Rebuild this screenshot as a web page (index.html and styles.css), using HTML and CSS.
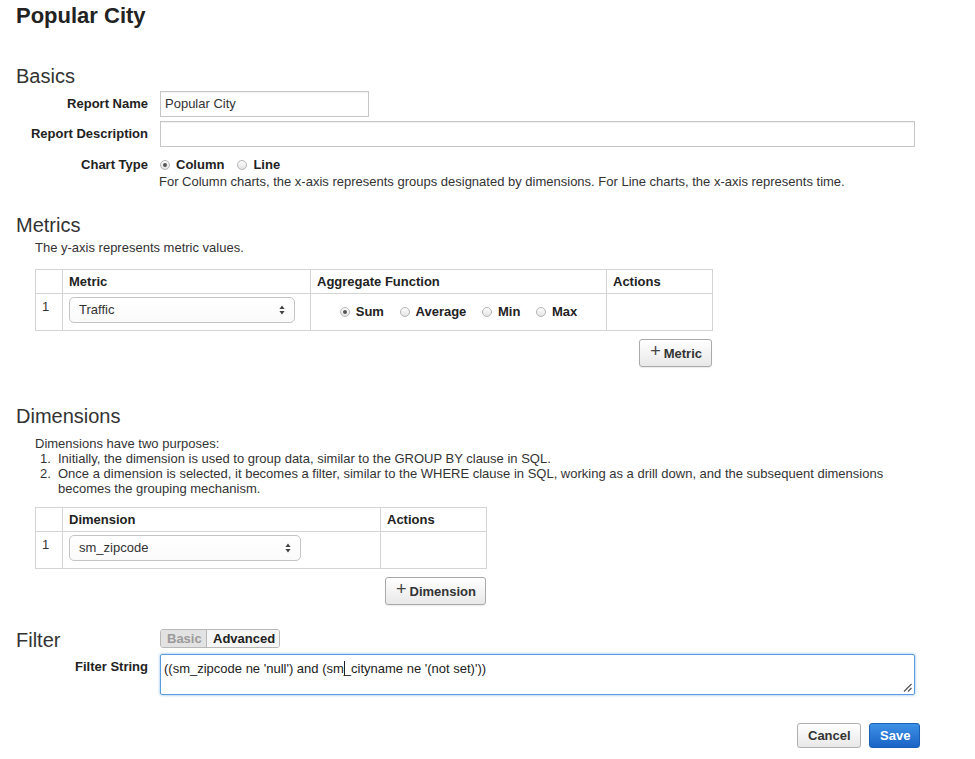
FILE: index.html
```html
<!DOCTYPE html>
<html>
<head>
<meta charset="utf-8">
<link rel="stylesheet" href="styles.css">
</head>
<body>
<div class="page">
  <h1 class="title">Popular City</h1>

  <h2 class="sec-title basics-title">Basics</h2>
  <div class="form-row row-name">
    <div class="lbl">Report Name</div>
    <div class="field"><div class="input short">Popular City</div></div>
  </div>
  <div class="form-row row-desc">
    <div class="lbl">Report Description</div>
    <div class="field"><div class="input"></div></div>
  </div>
  <div class="form-row row-chart">
    <div class="lbl lbl-tight">Chart Type</div>
    <div class="field">
      <div class="radios">
        <span class="opt"><span class="radio on"></span><b>Column</b></span>
        <span class="opt"><span class="radio"></span><b>Line</b></span>
      </div>
      <div class="help">For Column charts, the x-axis represents groups designated by dimensions. For Line charts, the x-axis represents time.</div>
    </div>
  </div>

  <h2 class="sec-title metrics-title">Metrics</h2>
  <div class="indent">
    <p class="desc">The y-axis represents metric values.</p>
    <div class="tbl-wrap metrics-wrap">
      <table class="tbl">
        <colgroup><col class="c-num"><col class="c-metric"><col class="c-agg"><col class="c-act"></colgroup>
        <thead><tr><th></th><th>Metric</th><th>Aggregate Function</th><th>Actions</th></tr></thead>
        <tbody><tr>
          <td class="num">1</td>
          <td class="sel-cell"><div class="select sel-metric">Traffic<svg class="arrows" width="6" height="10" viewBox="0 0 6 10"><path d="M3 0.5L5.6 4H0.4Z M3 9.5L5.6 6H0.4Z" fill="#444"/></svg></div></td>
          <td class="agg">
            <span class="opt"><span class="radio on"></span><b>Sum</b></span>
            <span class="opt"><span class="radio"></span><b>Average</b></span>
            <span class="opt"><span class="radio"></span><b>Min</b></span>
            <span class="opt"><span class="radio"></span><b>Max</b></span>
          </td>
          <td></td>
        </tr></tbody>
      </table>
      <div class="btn-row"><button class="btn add-btn"><span class="plus">+</span>Metric</button></div>
    </div>
  </div>

  <h2 class="sec-title dims-title">Dimensions</h2>
  <div class="indent">
    <p class="desc dims-desc">Dimensions have two purposes:</p>
    <ol class="dims-list">
      <li>Initially, the dimension is used to group data, similar to the GROUP BY clause in SQL.</li>
      <li>Once a dimension is selected, it becomes a filter, similar to the WHERE clause in SQL, working as a drill down, and the subsequent dimensions becomes the grouping mechanism.</li>
    </ol>
    <div class="tbl-wrap dims-wrap">
      <table class="tbl">
        <colgroup><col class="c-num"><col class="c-dim"><col class="c-act"></colgroup>
        <thead><tr><th></th><th>Dimension</th><th>Actions</th></tr></thead>
        <tbody><tr>
          <td class="num">1</td>
          <td class="sel-cell"><div class="select sel-dim">sm_zipcode<svg class="arrows" width="6" height="10" viewBox="0 0 6 10"><path d="M3 0.5L5.6 4H0.4Z M3 9.5L5.6 6H0.4Z" fill="#444"/></svg></div></td>
          <td></td>
        </tr></tbody>
      </table>
      <div class="btn-row"><button class="btn add-btn"><span class="plus">+</span>Dimension</button></div>
    </div>
  </div>

  <div class="form-row filter-head">
    <h2 class="sec-title">Filter</h2>
    <div class="field">
      <div class="toggle"><span class="tg tg-off">Basic</span><span class="tg tg-on">Advanced</span></div>
    </div>
  </div>
  <div class="form-row row-filter">
    <div class="lbl lbl-filter">Filter String</div>
    <div class="field">
      <div class="textarea">((sm_zipcode ne 'null') and (sm_cityname ne '(not set)'))<span class="caret"></span><svg class="grip" width="9" height="9" viewBox="0 0 9 9"><path d="M8.5 1L1 8.5M8.5 5L5 8.5" stroke="#555" stroke-width="1.2"/></svg></div>
    </div>
  </div>

  <div class="footer">
    <button class="btn cancel">Cancel</button>
    <button class="btn save">Save</button>
  </div>
</div>
</body>
</html>
```

FILE: styles.css
```css
* { box-sizing: border-box; }
body {
  margin: 0;
  font-family: "Liberation Sans", Arial, Helvetica, sans-serif;
  font-size: 13px;
  color: #333;
  background: #fff;
}
.page { width: 899px; margin-left: 16px; padding-top: 3px; }
.title { margin: 0; font-size: 22px; line-height: 26px; font-weight: bold; color: #222; }
.sec-title { margin: 0; font-size: 20px; line-height: 24px; font-weight: normal; color: #333; }
.basics-title { margin-top: 35px; }
.metrics-title { margin-top: 23px; }
.dims-title { margin-top: 37px; }

.form-row { display: grid; grid-template-columns: 132px 1fr; column-gap: 12px; }
.lbl { text-align: right; font-weight: bold; line-height: 26px; color: #222; white-space: nowrap; }
.row-name { margin-top: 3px; }
.row-desc { margin-top: 4px; }
.row-chart { margin-top: 9px; }
.lbl-tight { line-height: 18px; }

.input {
  height: 26px;
  border: 1px solid #c6c6c6;
  box-shadow: inset 0 1px 1px rgba(0,0,0,0.06);
  padding: 0 4px;
  line-height: 24px;
  color: #333;
  background: #fff;
}
.input.short { width: 209px; }

.radios { display: flex; gap: 13px; line-height: 18px; }
.opt { display: inline-flex; align-items: center; gap: 6px; }
.opt b { color: #222; }
.radio {
  width: 10px; height: 10px; border-radius: 50%;
  border: 1px solid #b5b5b5;
  background: linear-gradient(#fdfdfd, #e4e4e4);
  position: relative;
  flex: none;
}
.radio.on::after {
  content: ""; position: absolute; left: 2px; top: 2px;
  width: 4px; height: 4px; border-radius: 50%; background: #555;
}
.help { line-height: 16px; margin-left: -1px; color: #333; }

.indent { margin-left: 19px; }
.desc { margin: 3px 0 0; line-height: 16px; }
.tbl-wrap { margin-top: 13px; }
.metrics-wrap { width: 677px; }
.dims-wrap { width: 451px; margin-top: 11px; }

.tbl { border-collapse: collapse; table-layout: fixed; width: 100%; }
.tbl th, .tbl td { border: 1px solid #d4d4d4; padding: 0 6px; vertical-align: top; color: #333; }
.tbl thead tr { height: 24px; }
.tbl th { text-align: left; font-weight: bold; color: #222; line-height: 22px; vertical-align: middle; }
.tbl tbody tr { height: 37px; }
.tbl td.num { padding-top: 5px; line-height: 16px; color: #333; }
.tbl td.sel-cell { padding-top: 3px; }
.c-num { width: 27px; }
.c-metric { width: 248px; }
.c-agg { width: 296px; }
.c-act { width: 106px; }
.c-dim { width: 318px; }

.select {
  height: 26px;
  border: 1px solid #c4c4c4;
  border-radius: 5px;
  background: linear-gradient(#fff, #fafafa);
  padding: 0 9px;
  line-height: 24px;
  display: flex;
  justify-content: space-between;
  align-items: center;
  color: #333;
}
.sel-metric { width: 226px; }
.sel-dim { width: 232px; }
.arrows { flex: none; }

.tbl td.agg { text-align: center; vertical-align: middle; padding: 0; }
.agg .opt { margin: 0 6px; }

.btn-row { display: flex; justify-content: flex-end; margin-top: 8px; }
.btn {
  font-family: inherit;
  font-size: 13px;
  font-weight: bold;
  color: #333;
  border: 1px solid #aaa;
  border-radius: 3px;
  background: linear-gradient(#ffffff, #e8e8e8);
  box-shadow: 0 1px 1px rgba(0,0,0,0.08);
  cursor: pointer;
}
.add-btn { height: 28px; padding: 0 9px 0 10px; display: inline-flex; align-items: center; }
.plus { font-weight: normal; font-size: 18px; margin-right: 3px; position: relative; top: -2px; color: #444; }

.dims-desc { margin-top: 8px; line-height: 15px; }
.dims-list { margin: 0; padding-left: 23px; line-height: 15px; }
.dims-list li { padding-left: 0; }
.dims-list li::marker { content: counter(list-item) ".  "; }

.filter-head { margin-top: 23px; }
.toggle {
  display: inline-flex;
  height: 19px;
  border: 1px solid #b8b8b8;
  border-radius: 3px;
  overflow: hidden;
  margin-top: 1px;
}
.tg { line-height: 17px; padding: 0 6px; font-weight: bold; }
.tg-off { background: #e2e2e2; color: #9a9a9a; border-right: 1px solid #b8b8b8; width: 46px; }
.tg-on { background: #f6f6f6; color: #222; width: 72px; }

.row-filter { margin-top: 2px; }
.lbl-filter { line-height: 18px; padding-top: 4px; }
.textarea {
  position: relative;
  height: 41px;
  border: 1px solid #5a9ce0;
  border-radius: 2px;
  box-shadow: 0 0 3px rgba(80,150,230,0.7);
  padding: 5px 3px;
  line-height: 17px;
  color: #222;
  white-space: pre;
}
.caret { position: absolute; left: 183px; top: 6px; width: 1px; height: 15px; background: #222; }
.grip { position: absolute; right: 2px; bottom: 2px; }

.footer { display: flex; justify-content: flex-end; gap: 8px; width: 904px; margin-top: 28px; }
.footer .btn { height: 25px; padding: 0 10px; }
.cancel { width: 64px; border-color: #b0b0b0; }
.save {
  width: 51px;
  color: #fff;
  border-color: #1a5fb4;
  background: linear-gradient(#3d91e6, #1a63c6);
}
```
